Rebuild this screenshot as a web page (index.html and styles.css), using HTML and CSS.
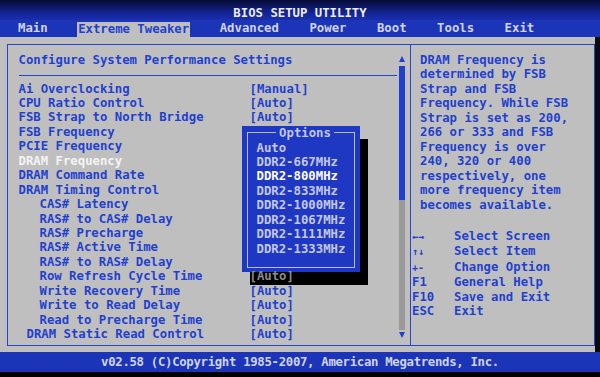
FILE: index.html
```html
<!DOCTYPE html>
<html lang="en">
<head>
  <meta charset="UTF-8">
  <title>BIOS SETUP UTILITY</title>
  <link rel="stylesheet" href="styles.css">
</head>
<body>
  <div class="screen">
    <div class="title">BIOS SETUP UTILITY</div>

    <nav class="tabs">
      <span class="tab">Main</span>
      <span class="tab active">Extreme Tweaker</span>
      <span class="tab">Advanced</span>
      <span class="tab">Power</span>
      <span class="tab">Boot</span>
      <span class="tab">Tools</span>
      <span class="tab">Exit</span>
    </nav>

    <main class="main">
      <div class="frame">
        <section class="settings">
          <div class="settings-body">
            <h1 class="heading">Configure System Performance Settings</h1>
            <!-- values hidden behind the Options popup are left out -->
            <ul class="items">
              <li><span>Ai Overclocking</span><span>[Manual]</span></li>
              <li><span>CPU Ratio Control</span><span>[Auto]</span></li>
              <li><span>FSB Strap to North Bridge</span><span>[Auto]</span></li>
              <li><span>FSB Frequency</span></li>
              <li><span>PCIE Frequency</span></li>
              <li class="current"><span>DRAM Frequency</span></li>
              <li><span>DRAM Command Rate</span></li>
              <li><span>DRAM Timing Control</span></li>
              <li class="sub"><span>CAS# Latency</span></li>
              <li class="sub"><span>RAS# to CAS# Delay</span></li>
              <li class="sub"><span>RAS# Precharge</span></li>
              <li class="sub"><span>RAS# Active Time</span></li>
              <li class="sub"><span>RAS# to RAS# Delay</span></li>
              <li class="sub"><span>Row Refresh Cycle Time</span><span class="dim">[Auto]</span></li>
              <li class="sub"><span>Write Recovery Time</span><span>[Auto]</span></li>
              <li class="sub"><span>Write to Read Delay</span><span>[Auto]</span></li>
              <li class="sub"><span>Read to Precharge Time</span><span>[Auto]</span></li>
              <li class="static"><span>DRAM Static Read Control</span><span>[Auto]</span></li>
            </ul>
          </div>
          <div class="scrollbar">
            <span class="arrow up"></span>
            <div class="track"><div class="thumb"></div></div>
            <span class="arrow down"></span>
          </div>
        </section>

        <aside class="help">
          <p class="help-text">
            DRAM Frequency is<br>
            determined by FSB<br>
            Strap and FSB<br>
            Frequency. While FSB<br>
            Strap is set as 200,<br>
            266 or 333 and FSB<br>
            Frequency is over<br>
            240, 320 or 400<br>
            respectively, one<br>
            more frequency item<br>
            becomes available.
          </p>
          <dl class="keys">
            <dt><span class="glyph">←→</span></dt><dd>Select Screen</dd>
            <dt><span class="glyph">↑↓</span></dt><dd>Select Item</dd>
            <dt><span class="glyph">+-</span></dt><dd>Change Option</dd>
            <dt>F1</dt><dd>General Help</dd>
            <dt>F10</dt><dd>Save and Exit</dd>
            <dt>ESC</dt><dd>Exit</dd>
          </dl>
        </aside>

        <div class="options">
          <fieldset>
            <legend>Options</legend>
            <ul>
              <li>Auto</li>
              <li>DDR2-667MHz</li>
              <li class="selected">DDR2-800MHz</li>
              <li>DDR2-833MHz</li>
              <li>DDR2-1000MHz</li>
              <li>DDR2-1067MHz</li>
              <li>DDR2-1111MHz</li>
              <li>DDR2-1333MHz</li>
            </ul>
          </fieldset>
        </div>
      </div>
    </main>

    <footer class="footer">v02.58 (C)Copyright 1985-2007, American Megatrends, Inc.</footer>
  </div>
</body>
</html>
```

FILE: styles.css
```css
body {
  margin: 0;
  background-color: #000;
  font-family: "DejaVu Sans Mono", "Liberation Mono", monospace;
  font-weight: bold;
  font-size: 12.3px;
}

.screen {
  width: 600px;
  height: 377px;
  padding-bottom: 5px;
  box-sizing: border-box;
  display: flex;
  flex-direction: column;
}

.title {
  height: 17px;
  padding-top: 3px;
  line-height: 20px;
  text-align: center;
  color: #eceef6;
  background: linear-gradient(#060b34, #15269a 70%, #1a2fae);
}

.tabs {
  height: 17px;
  display: flex;
  gap: 30.5px;
  padding-left: 18px;
  background-color: #1c35b8;
  color: #cfd4f0;
  line-height: 17px;
}

.tab.active {
  margin: 2px -1px 0;
  padding: 0 1px;
  line-height: 15px;
  background-color: #bfbfbf;
  color: #1f3fcf;
}

.main {
  flex: 1;
  padding: 7px 0 6px 7px;
  background-color: #bfbfbf;
  border-right: 5px solid #0b0b0b;
}

.frame {
  position: relative;
  height: 100%;
  box-sizing: border-box;
  display: flex;
  border: 1.5px solid #2644c8;
  color: #1f3fcf;
}

/* left: settings list */

.settings {
  width: 401.5px;
  display: flex;
  border-right: 1.5px solid #2644c8;
}

.settings-body {
  flex: 1;
  padding: 7.5px 0 0 10.5px;
}

.heading {
  margin: 0;
  font-size: inherit;
  line-height: 15px;
  padding-bottom: 7px;
  border-bottom: 1.5px solid #2644c8;
}

.items {
  margin: 6px 0 0;
  padding: 0;
  list-style: none;
}

.items li {
  display: grid;
  grid-template-columns: 231px auto;
  line-height: 14.45px;
  white-space: nowrap;
}

.items li.sub span:first-child {
  padding-left: 21px;
}

.items li.static span:first-child {
  padding-left: 8px;
}

.items li.current span:first-child {
  color: #f4f4f4;
}

.items .dim {
  position: relative;
  z-index: 2;
  color: #8a8a8a;
}

.scrollbar {
  width: 10px;
  margin-right: 3px;
  padding-top: 10.5px;
  display: flex;
  flex-direction: column;
  align-items: center;
}

.arrow {
  width: 0;
  height: 0;
  border-left: 3.5px solid transparent;
  border-right: 3.5px solid transparent;
}

.arrow.up {
  border-bottom: 6px solid #1f3fcf;
  margin-bottom: 4px;
}

.arrow.down {
  border-top: 6px solid #1f3fcf;
  margin-top: 2px;
}

.track {
  width: 6px;
  height: 264px;
  background-color: #9a9a9a;
}

.thumb {
  height: 134px;
  background-color: #1f3fcf;
}

/* right: help */

.help {
  flex: 1;
  padding: 7.5px 0 0 9.5px;
  line-height: 14.5px;
}

.help-text {
  margin: 0;
  white-space: nowrap;
}

.keys {
  margin: 16.5px 0 0 -8px;
  display: grid;
  grid-template-columns: 42px auto;
}

.keys dt,
.keys dd {
  margin: 0;
}

.keys .glyph {
  font-size: 10px;
}

/* popup */

.options {
  position: absolute;
  left: 233.5px;
  top: 80.5px;
  z-index: 1;
  width: 118px;
  height: 146px;
  box-sizing: border-box;
  padding: 0 5px 4px;
  background-color: #1f38c4;
  box-shadow: 8px 13px 0 #000;
  color: #c4c8e4;
}

.options fieldset {
  height: 100%;
  box-sizing: border-box;
  margin: 0;
  padding: 1px 0 0 9px;
  border: 1px solid #b8bde6;
}

.options legend {
  margin: 0 auto;
  padding: 0 3px;
  line-height: 14px;
}

.options ul {
  margin: 0;
  padding: 0;
  list-style: none;
}

.options li {
  line-height: 14.45px;
}

.options li.selected {
  color: #fff;
}

.footer {
  height: 20px;
  line-height: 20px;
  text-align: center;
  letter-spacing: -0.3px;
  background-color: #1c35b8;
  color: #d0d4ee;
}
```
